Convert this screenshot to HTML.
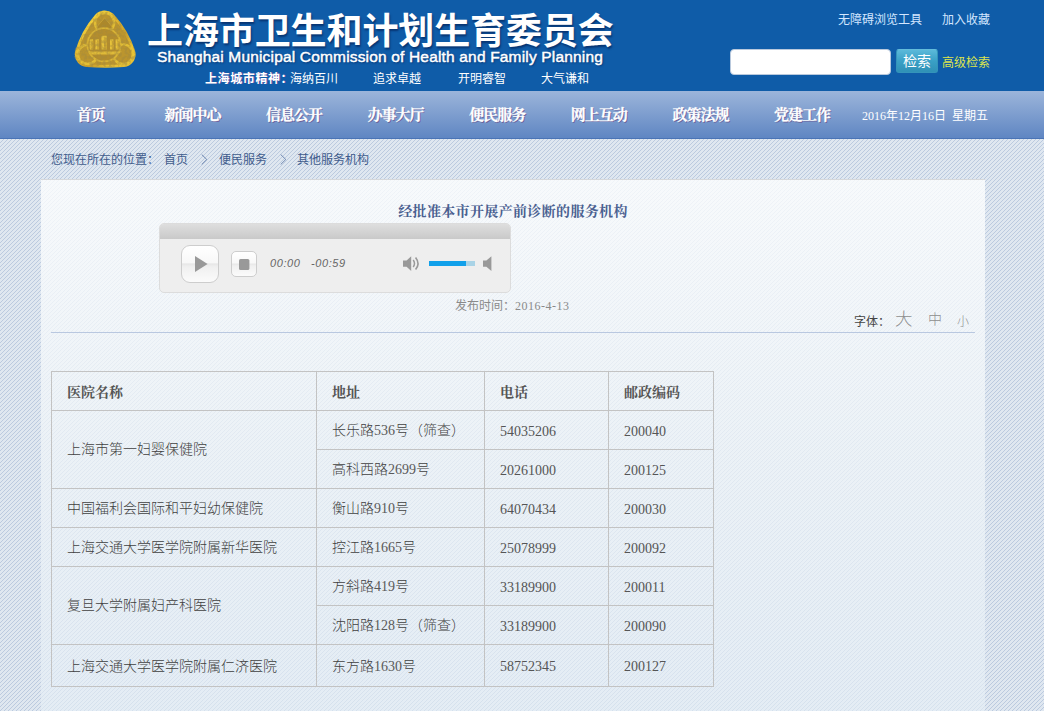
<!DOCTYPE html>
<html lang="zh-CN">
<head>
<meta charset="utf-8">
<title>经批准本市开展产前诊断的服务机构</title>
<style>
*{margin:0;padding:0;box-sizing:border-box;}
html,body{width:1044px;height:711px;overflow:hidden;}
body{position:relative;background:#dfe7f0;font-family:"Liberation Serif","Noto Sans CJK SC",sans-serif;font-size:12px;color:#555;}
.abs{position:absolute;white-space:nowrap;}
#stripes{position:absolute;left:0;top:0;width:1044px;height:711px;}
#header{position:absolute;left:0;top:0;width:1044px;height:91px;background:#0f5ca8;}
#title{left:147px;top:6px;font-family:"Liberation Sans","Noto Sans CJK SC",sans-serif;font-weight:bold;font-size:36px;line-height:52px;color:#fff;text-shadow:1px 2px 2px rgba(0,20,70,.55);letter-spacing:-.1px;}
#sub{left:157px;top:46px;font-family:"Liberation Sans","Noto Sans CJK SC",sans-serif;font-weight:normal;font-size:15.5px;line-height:22px;letter-spacing:.17px;-webkit-text-stroke:.45px #fff;color:#fff;text-shadow:1px 1px 2px rgba(0,20,70,.6);}
.spirit{top:71px;font-family:"Liberation Sans","Noto Sans CJK SC",sans-serif;font-size:12px;line-height:16px;color:#fff;}
.toplink{top:12px;font-family:"Liberation Sans","Noto Sans CJK SC",sans-serif;font-size:12px;line-height:16px;color:#d3e6ff;}
#q{position:absolute;left:730px;top:49px;width:161px;height:26px;background:#fff;border:1px solid #b9c9dd;border-radius:4px;}
#btn{position:absolute;left:896px;top:49px;width:42px;height:24px;border-radius:3px;background:linear-gradient(#5bb9da,#3aa0c6 50%,#2f91b6);border:1px solid #3494ba;border-top-color:#62bcdb;color:#fff;font-family:"Liberation Sans","Noto Sans CJK SC",sans-serif;font-size:14px;line-height:22px;text-align:center;}
#adv{left:942px;top:55px;font-family:"Liberation Sans","Noto Sans CJK SC",sans-serif;font-size:12px;line-height:16px;color:#dde44e;}
#nav{position:absolute;left:0;top:91px;width:1044px;height:48px;background:linear-gradient(#9cb5da,#5f86c3);border-bottom:1px solid #4a74b6;}
#nav a{position:absolute;top:1px;width:101.6px;height:47px;line-height:47px;text-align:center;color:#fff;font-family:"Liberation Serif","Noto Serif CJK SC",serif;font-weight:bold;font-size:15px;letter-spacing:-1px;-webkit-text-stroke:.25px #fff;text-shadow:1px 1px 0 rgba(100,50,110,.55);}
#date{left:862px;top:108px;word-spacing:3px;font-family:"Liberation Serif","Noto Sans CJK SC",sans-serif;font-size:12px;line-height:16px;color:#fff;}
.bc{top:152px;font-family:"Liberation Sans","Noto Sans CJK SC",sans-serif;font-size:12px;line-height:16px;color:#3f5c8c;}
#content{position:absolute;left:41px;top:179px;width:944px;height:532px;border-top:1px solid #d6d8db;background:linear-gradient(rgba(254,255,255,.78),rgba(241,246,249,.7) 51%,rgba(231,240,247,.6));}
#h1{left:41px;width:944px;top:202px;text-align:center;font-family:"Liberation Serif","Noto Serif CJK SC",serif;font-weight:bold;font-size:14px;line-height:20px;color:#4a6090;letter-spacing:.35px;}
#player{position:absolute;left:159px;top:223px;width:352px;height:70px;border:1px solid #dcdcdc;border-radius:5px;background:#eee;overflow:hidden;}
#player .bar{position:absolute;left:0;top:0;width:100%;height:15px;background:linear-gradient(#dedede,#c9c9c9);}
#play{position:absolute;left:21px;top:21px;width:38px;height:38px;border:1px solid #cdcdcd;border-radius:9px;background:linear-gradient(#fff 0%,#f8f8f8 46%,#e7e7e7 50%,#f0f0f0 58%,#fbfbfb 100%);}
#stop{position:absolute;left:71px;top:27px;width:26px;height:26px;border:1px solid #cdcdcd;border-radius:5px;background:linear-gradient(#fff 0%,#f8f8f8 46%,#e7e7e7 50%,#f0f0f0 58%,#fbfbfb 100%);}
.tm{top:255px;font-family:"Liberation Sans",sans-serif;font-style:italic;font-size:11px;line-height:16px;color:#666;letter-spacing:.6px;}
#pub{left:455px;top:298px;font-family:"Liberation Serif","Noto Sans CJK SC",sans-serif;font-size:12px;line-height:16px;color:#8a8a8a;}
.fs{font-family:"Liberation Sans","Noto Sans CJK SC",sans-serif;color:#8e8e8e;font-weight:300;}
#hr{position:absolute;left:51px;top:332px;width:924px;height:1px;background:#b9c8e0;}
table{position:absolute;left:51px;top:371px;border-collapse:collapse;table-layout:fixed;width:663px;}
td,th{border:1px solid #c3c3c3;height:39px;padding:2px 0 0 15px;text-align:left;vertical-align:middle;font-size:14px;line-height:20px;color:#404040;font-weight:300;white-space:nowrap;}
th{font-family:"Liberation Serif","Noto Serif CJK SC",serif;font-weight:bold;color:#555;}
tr.last td{height:42px;}
td i{font-style:normal;color:#5a5a5a;font-weight:400;}
td[rowspan]{padding-top:1px;}
th{padding-top:4px;}
td.n{padding-top:4px;color:#555;font-weight:400;}
tr.last td.n{padding-top:2px;}
</style>
</head>
<body>
<svg id="stripes" width="1044" height="711">
<defs><pattern id="dp" x="0" y="0" width="4" height="4" patternUnits="userSpaceOnUse">
<rect width="4" height="4" fill="#dfe7f0"/>
<rect x="2" y="0" width="1" height="1" fill="#bbcadf"/>
<rect x="1" y="1" width="1" height="1" fill="#bbcadf"/>
<rect x="0" y="2" width="1" height="1" fill="#bbcadf"/>
<rect x="3" y="3" width="1" height="1" fill="#bbcadf"/>
</pattern></defs>
<rect x="0" y="139" width="1044" height="572" fill="url(#dp)"/>
</svg>

<div id="header"></div>
<svg class="abs" id="logo" style="left:65px;top:0px;" width="80" height="80" viewBox="65 0 80 80">
<defs>
<linearGradient id="lg1" x1="0" y1="0" x2="1" y2="1"><stop offset="0" stop-color="#f2d03c"/><stop offset=".45" stop-color="#dbb02e"/><stop offset=".7" stop-color="#c99f2a"/><stop offset="1" stop-color="#e6c034"/></linearGradient>
<filter id="lb" filterUnits="userSpaceOnUse" x="65" y="0" width="80" height="80"><feGaussianBlur stdDeviation=".5"/></filter>
<filter id="ln" filterUnits="userSpaceOnUse" x="65" y="0" width="80" height="80">
<feTurbulence type="fractalNoise" baseFrequency=".32" numOctaves="2" seed="7" result="t"/>
<feColorMatrix in="t" type="matrix" values="0 0 0 0 .36  0 0 0 0 .25  0 0 0 0 .05  0 0 0 -3.4 2.0" result="n"/>
<feComposite in="n" in2="SourceGraphic" operator="in"/>
<feGaussianBlur stdDeviation=".35"/>
</filter>
<clipPath id="lc"><path d="M104.6 10.4 Q113 10.4 118 19 L133.6 46 Q138.6 56 131.6 62.6 Q127 67 118 67 H91 Q82 67 77.6 62.6 Q71 56 76 46 L91.4 19 Q96.4 10.4 104.6 10.4 Z"/></clipPath>
</defs>
<g filter="url(#lb)">
<path d="M104.6 23 Q117.4 36.8 123 54.5 Q105.2 55.6 87.4 54.5 Q92.4 36.8 104.6 23 Z" fill="url(#lg1)" stroke="url(#lg1)" stroke-width="25.2" stroke-linejoin="round"/>
<path d="M104.6 23 Q117.4 36.8 123 54.5 Q105.2 55.6 87.4 54.5 Q92.4 36.8 104.6 23 Z" fill="#bb952f" stroke="#bb952f" stroke-width="19.6" stroke-linejoin="round"/>
<g fill="none" stroke="#e9c638" stroke-width="2.4" opacity=".85">
<circle cx="104.6" cy="22.6" r="9.6"/>
<circle cx="87.6" cy="54.4" r="9.6"/>
<circle cx="123" cy="54.2" r="9.8"/>
</g>
<path d="M104.6 17.8 L112.6 27.4 L104.6 33 L96.4 27.4 Z" fill="#a7832b" stroke="#cfa933" stroke-width="1" opacity=".7"/>
<circle cx="104" cy="44.8" r="16.6" fill="#b38d2d" stroke="#d9b436" stroke-width="1.8"/>
<g fill="#e6c23a">
<rect x="89.6" y="39.2" width="3.6" height="10.4" rx=".7"/>
<rect x="95.4" y="39.2" width="3.6" height="10.4" rx=".7"/>
<rect x="101.4" y="35.8" width="5.6" height="13.8" rx=".9"/>
<rect x="110" y="39.2" width="3.6" height="10.4" rx=".7"/>
<rect x="115.6" y="39.2" width="3.6" height="10.4" rx=".7"/>
</g>
<g fill="#b08a2c" opacity=".5">
<rect x="91.4" y="40.6" width="1.7" height="9"/>
<rect x="97.2" y="40.6" width="1.7" height="9"/>
<rect x="104" y="37.6" width="2.9" height="12"/>
<rect x="111.8" y="40.6" width="1.7" height="9"/>
<rect x="117.4" y="40.6" width="1.7" height="9"/>
</g>
<path d="M88.6 51.4 H121.6 L117.6 54.4 H92.4 Z" fill="#dfba37"/>
</g>
<rect x="70" y="5" width="70" height="66" fill="#000" clip-path="url(#lc)" filter="url(#ln)" opacity=".5"/>
</svg>
<div class="abs" id="title">上海市卫生和计划生育委员会</div>
<div class="abs" id="sub">Shanghai Municipal Commission of Health and Family Planning</div>
<div class="abs spirit" style="left:205px;font-weight:bold;letter-spacing:.6px;text-shadow:1px 0 0 rgba(190,70,170,.45);">上海城市精神：</div>
<div class="abs spirit" style="left:290px;">海纳百川</div>
<div class="abs spirit" style="left:373px;">追求卓越</div>
<div class="abs spirit" style="left:458px;">开明睿智</div>
<div class="abs spirit" style="left:541px;">大气谦和</div>
<div class="abs toplink" style="left:838px;">无障碍浏览工具</div>
<div class="abs toplink" style="left:942px;">加入收藏</div>
<div id="q"></div>
<div id="btn">检索</div>
<div class="abs" id="adv">高级检索</div>

<div id="nav">
<a style="left:40px">首页</a>
<a style="left:141.6px">新闻中心</a>
<a style="left:243.2px">信息公开</a>
<a style="left:344.8px">办事大厅</a>
<a style="left:446.4px">便民服务</a>
<a style="left:548px">网上互动</a>
<a style="left:649.6px">政策法规</a>
<a style="left:751.2px">党建工作</a>
</div>
<div class="abs" id="date">2016年12月16日 星期五</div>

<div class="abs bc" style="left:51px;">您现在所在的位置：</div>
<div class="abs bc" style="left:164px;">首页</div>
<svg class="abs" style="left:201px;top:154px;" width="7" height="11" viewBox="0 0 7 11"><path d="M0.7 0.5 L5.8 5.5 L0.7 10.5" fill="none" stroke="#6e87b0" stroke-width="1"/></svg>
<div class="abs bc" style="left:219px;">便民服务</div>
<svg class="abs" style="left:280px;top:154px;" width="7" height="11" viewBox="0 0 7 11"><path d="M0.7 0.5 L5.8 5.5 L0.7 10.5" fill="none" stroke="#6e87b0" stroke-width="1"/></svg>
<div class="abs bc" style="left:297px;">其他服务机构</div>

<div id="content"></div>
<div class="abs" id="h1">经批准本市开展产前诊断的服务机构</div>

<div id="player">
<div class="bar"></div>
<div id="play"></div>
<div id="stop"></div>
</div>
<svg class="abs" style="left:159px;top:223px;" width="352" height="70" viewBox="159 223 352 70">
<path d="M195 256 L207.6 264 L195 272 Z" fill="#999"/>
<rect x="239" y="259" width="10.4" height="11" rx="1.6" fill="#999"/>
<path d="M403 260.4 H406.6 L411.2 256.2 V271 L406.6 266.8 H403 Z" fill="#999"/>
<path d="M413.2 260 Q415.8 263.5 413.2 267" fill="none" stroke="#999" stroke-width="1.5"/>
<path d="M415.6 257.4 Q420.4 263.5 415.6 269.6" fill="none" stroke="#999" stroke-width="1.6"/>
<rect x="429" y="261" width="46" height="5" fill="#a9d3e6"/>
<rect x="429" y="261" width="37" height="5" fill="#11a0ea"/>
<path d="M483 260.4 H486.4 L491.4 256.2 V271 L486.4 266.8 H483 Z" fill="#999"/>
</svg>
<div class="abs tm" style="left:270px;">00:00</div>
<div class="abs tm" style="left:311px;">-00:59</div>

<div class="abs" id="pub">发布时间：<span style="letter-spacing:.5px">2016-4-13</span></div>
<div class="abs fs" style="left:854px;top:314px;font-size:12px;line-height:16px;color:#444;font-weight:400;">字体：</div>
<div class="abs fs" style="left:895px;top:307px;font-size:17.5px;line-height:24px;">大</div>
<div class="abs fs" style="left:928px;top:309px;font-size:14px;line-height:20px;">中</div>
<div class="abs fs" style="left:957px;top:314px;font-size:12px;line-height:16px;">小</div>
<div id="hr"></div>

<table>
<colgroup><col style="width:265px"><col style="width:168px"><col style="width:124px"><col style="width:105px"></colgroup>
<tr><th>医院名称</th><th>地址</th><th>电话</th><th>邮政编码</th></tr>
<tr><td rowspan="2">上海市第一妇婴保健院</td><td>长乐路<i>536</i>号（筛查）</td><td class="n">54035206</td><td class="n">200040</td></tr>
<tr><td>高科西路<i>2699</i>号</td><td class="n">20261000</td><td class="n">200125</td></tr>
<tr><td>中国福利会国际和平妇幼保健院</td><td>衡山路<i>910</i>号</td><td class="n">64070434</td><td class="n">200030</td></tr>
<tr><td>上海交通大学医学院附属新华医院</td><td>控江路<i>1665</i>号</td><td class="n">25078999</td><td class="n">200092</td></tr>
<tr><td rowspan="2">复旦大学附属妇产科医院</td><td>方斜路<i>419</i>号</td><td class="n">33189900</td><td class="n">200011</td></tr>
<tr><td>沈阳路<i>128</i>号（筛查）</td><td class="n">33189900</td><td class="n">200090</td></tr>
<tr class="last"><td>上海交通大学医学院附属仁济医院</td><td>东方路<i>1630</i>号</td><td class="n">58752345</td><td class="n">200127</td></tr>
</table>
</body>
</html>
